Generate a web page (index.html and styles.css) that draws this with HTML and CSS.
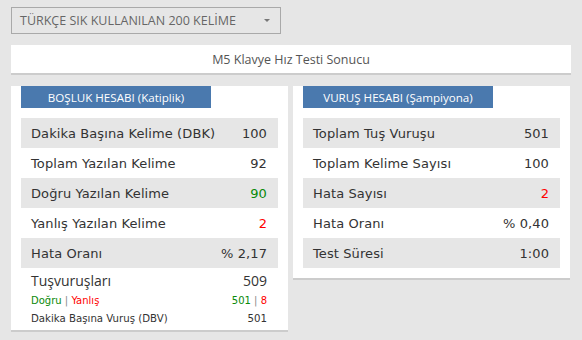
FILE: index.html
```html
<!DOCTYPE html>
<html lang="tr">
<head>
<meta charset="utf-8">
<link rel="stylesheet" href="styles.css">
</head>
<body>
<div class="select">
  <span class="select-text">TÜRKÇE SIK KULLANILAN 200 KELİME</span>
  <span class="caret"></span>
</div>
<div class="title">M5 Klavye Hız Testi Sonucu</div>
<div class="cards">
  <div class="card">
    <div class="card-head">BOŞLUK HESABI (Katiplik)</div>
    <div class="row"><span>Dakika Başına Kelime (DBK)</span><span>100</span></div>
    <div class="row"><span>Toplam Yazılan Kelime</span><span>92</span></div>
    <div class="row"><span>Doğru Yazılan Kelime</span><span class="green">90</span></div>
    <div class="row"><span>Yanlış Yazılan Kelime</span><span class="red">2</span></div>
    <div class="row"><span>Hata Oranı</span><span>% 2,17</span></div>
    <div class="keys">
      <div class="keys-main"><span>Tuşvuruşları</span><span>509</span></div>
      <div class="keys-sub"><span><span class="green">Doğru</span> <span class="sep">|</span> <span class="red">Yanlış</span></span><span><span class="green">501</span> <span class="sep">|</span> <span class="red">8</span></span></div>
      <div class="keys-dbv"><span>Dakika Başına Vuruş (DBV)</span><span>501</span></div>
    </div>
  </div>
  <div class="card card-short">
    <div class="card-head">VURUŞ HESABI (Şampiyona)</div>
    <div class="row"><span>Toplam Tuş Vuruşu</span><span>501</span></div>
    <div class="row"><span>Toplam Kelime Sayısı</span><span>100</span></div>
    <div class="row"><span>Hata Sayısı</span><span class="red">2</span></div>
    <div class="row"><span>Hata Oranı</span><span>% 0,40</span></div>
    <div class="row"><span>Test Süresi</span><span>1:00</span></div>
  </div>
</div>
</body>
</html>
```
FILE: styles.css
```css
* { box-sizing: border-box; }
body {
  margin: 0;
  padding: 7px 11px;
  background: #e6e6e6;
  font-family: "DejaVu Sans", Verdana, sans-serif;
  color: #333;
}
.select {
  width: 270px;
  height: 27px;
  border: 1px solid #a9a9a9;
  display: flex;
  align-items: center;
  justify-content: space-between;
  padding: 0 10px 0 8px;
}
.select-text {
  font-family: "Open Sans", sans-serif;
  font-size: 12.5px;
  color: #666;
}
.caret {
  width: 0;
  height: 0;
  border-left: 3px solid transparent;
  border-right: 3px solid transparent;
  border-top: 3px solid #777;
}
.title {
  margin-top: 11px;
  width: 560px;
  height: 30px;
  background: #fff;
  border-bottom: 2px solid #ccc;
  display: flex;
  align-items: center;
  justify-content: center;
  font-family: "Open Sans", sans-serif;
  font-size: 12.5px;
  color: #555;
}
.cards {
  margin-top: 11px;
  display: flex;
  gap: 5px;
  align-items: flex-start;
}
.card {
  width: 277px;
  background: #fff;
  padding: 0 10px 0 10px;
  border-bottom: 2px solid #ccc;
}
.card-short { padding-bottom: 10px; }
.card-head {
  width: 190px;
  height: 22px;
  background: #4a79ae;
  color: #fff;
  font-family: "Open Sans", sans-serif;
  font-size: 11.6px;
  display: flex;
  align-items: center;
  justify-content: center;
  margin-bottom: 10px;
}
.row {
  height: 30px;
  display: flex;
  align-items: center;
  justify-content: space-between;
  padding: 0 11px 0 10px;
  font-size: 13px;
  letter-spacing: 0.1px;
}
.row:nth-child(even) { background: #e6e6e6; }
.green { color: #0a8a0a; }
.red { color: #f00; }
.sep { color: #888; }
.keys {
  padding: 0 11px 0 10px;
  height: 62px;
}
.keys > div {
  display: flex;
  justify-content: space-between;
  align-items: center;
}
.keys-main {
  height: 24px;
  font-family: "Open Sans", sans-serif;
  font-size: 14px;
  padding-top: 1px;
}
.keys-sub {
  height: 16px;
  font-size: 10px;
}
.keys-dbv {
  height: 20px;
  font-size: 10.2px;
}
```
